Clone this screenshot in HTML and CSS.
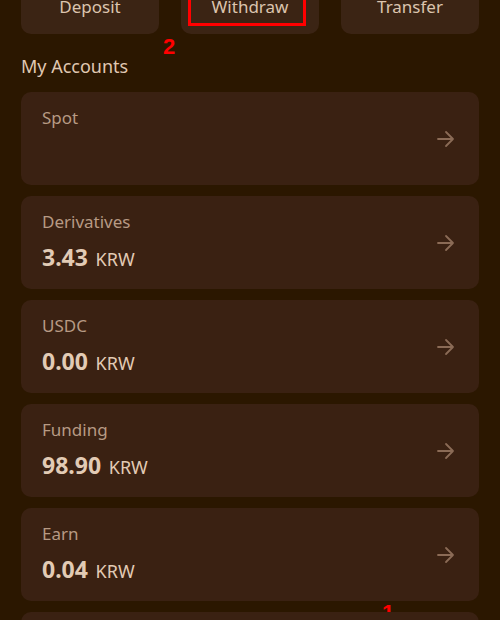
FILE: index.html
```html
<!DOCTYPE html>
<html lang="en">
<head>
    <meta charset="UTF-8">
    <meta name="viewport" content="width=device-width, initial-scale=1.0">
    <title>Assets</title>
    <link rel="stylesheet" href="styles.css">
</head>
<body>
    <div class="page">
        <div class="actions">
            <div class="action">Deposit</div>
            <div class="action">
                Withdraw
                <span class="mark-box"></span>
                <span class="mark mark-two">2</span>
            </div>
            <div class="action">Transfer</div>
        </div>

        <h2 class="section-title">My Accounts</h2>

        <div class="accounts">
            <div class="account">
                <div class="account-info">
                    <div class="account-name">Spot</div>
                </div>
                <svg class="arrow" viewBox="0 0 20 20"><path d="M2 10h15M10 3l7 7-7 7"/></svg>
            </div>
            <div class="account">
                <div class="account-info">
                    <div class="account-name">Derivatives</div>
                    <div class="account-value"><b>3.43</b> KRW</div>
                </div>
                <svg class="arrow" viewBox="0 0 20 20"><path d="M2 10h15M10 3l7 7-7 7"/></svg>
            </div>
            <div class="account">
                <div class="account-info">
                    <div class="account-name">USDC</div>
                    <div class="account-value"><b>0.00</b> KRW</div>
                </div>
                <svg class="arrow" viewBox="0 0 20 20"><path d="M2 10h15M10 3l7 7-7 7"/></svg>
            </div>
            <div class="account">
                <div class="account-info">
                    <div class="account-name">Funding</div>
                    <div class="account-value"><b>98.90</b> KRW</div>
                </div>
                <svg class="arrow" viewBox="0 0 20 20"><path d="M2 10h15M10 3l7 7-7 7"/></svg>
            </div>
            <div class="account">
                <div class="account-info">
                    <div class="account-name">Earn</div>
                    <div class="account-value"><b>0.04</b> KRW</div>
                </div>
                <svg class="arrow" viewBox="0 0 20 20"><path d="M2 10h15M10 3l7 7-7 7"/></svg>
                <span class="mark mark-one">1</span>
            </div>
            <div class="account"></div>
        </div>
    </div>
</body>
</html>
```

FILE: styles.css
```css
body {
    margin: 0;
    background-color: #2b1700;
    font-family: 'Noto Sans', 'Open Sans', sans-serif;
    overflow: hidden;
}

.page {
    padding: 0 21px;
    margin-top: -26px;
}

.actions {
    display: grid;
    grid-template-columns: repeat(3, 1fr);
    gap: 22px;
}

.action {
    position: relative;
    height: 60px;
    display: flex;
    align-items: center;
    justify-content: center;
    padding-top: 4px;
    box-sizing: border-box;
    background-color: #3b2414;
    border-radius: 10px;
    color: #dcc4ae;
    font-size: 17px;
}

.mark-box {
    position: absolute;
    left: 7px;
    right: 13px;
    top: 10px;
    bottom: 8px;
    border: 3px solid #ff0000;
}

.mark {
    position: absolute;
    color: #ff0000;
    font-family: 'Liberation Sans', sans-serif;
    font-weight: bold;
    font-size: 22px;
    line-height: 1;
}

.mark-two {
    left: -18px;
    top: 62px;
}

.mark-one {
    left: 361px;
    top: 94px;
}

.section-title {
    margin: 20px 0 14px;
    font-size: 18px;
    font-weight: normal;
    color: #e0c8b2;
    line-height: 24px;
}

.accounts {
    display: flex;
    flex-direction: column;
    gap: 11px;
}

.account {
    position: relative;
    height: 93px;
    box-sizing: border-box;
    padding: 14px 21px;
    background-color: #3a2112;
    border-radius: 10px;
    display: flex;
    align-items: center;
    justify-content: space-between;
}

.account-info {
    align-self: flex-start;
}

.account-name {
    font-size: 17px;
    line-height: 24px;
    color: #b79a84;
}

.account-value {
    margin-top: 9px;
    font-size: 18px;
    line-height: 28px;
    color: #e2cbb5;
}

.account-value b {
    font-size: 23px;
    font-weight: bold;
    margin-right: 3px;
}

.arrow {
    width: 20px;
    height: 20px;
    fill: none;
    stroke: #8b6b56;
    stroke-width: 1.8;
    stroke-linecap: round;
    stroke-linejoin: round;
    margin-right: 2px;
}
```
